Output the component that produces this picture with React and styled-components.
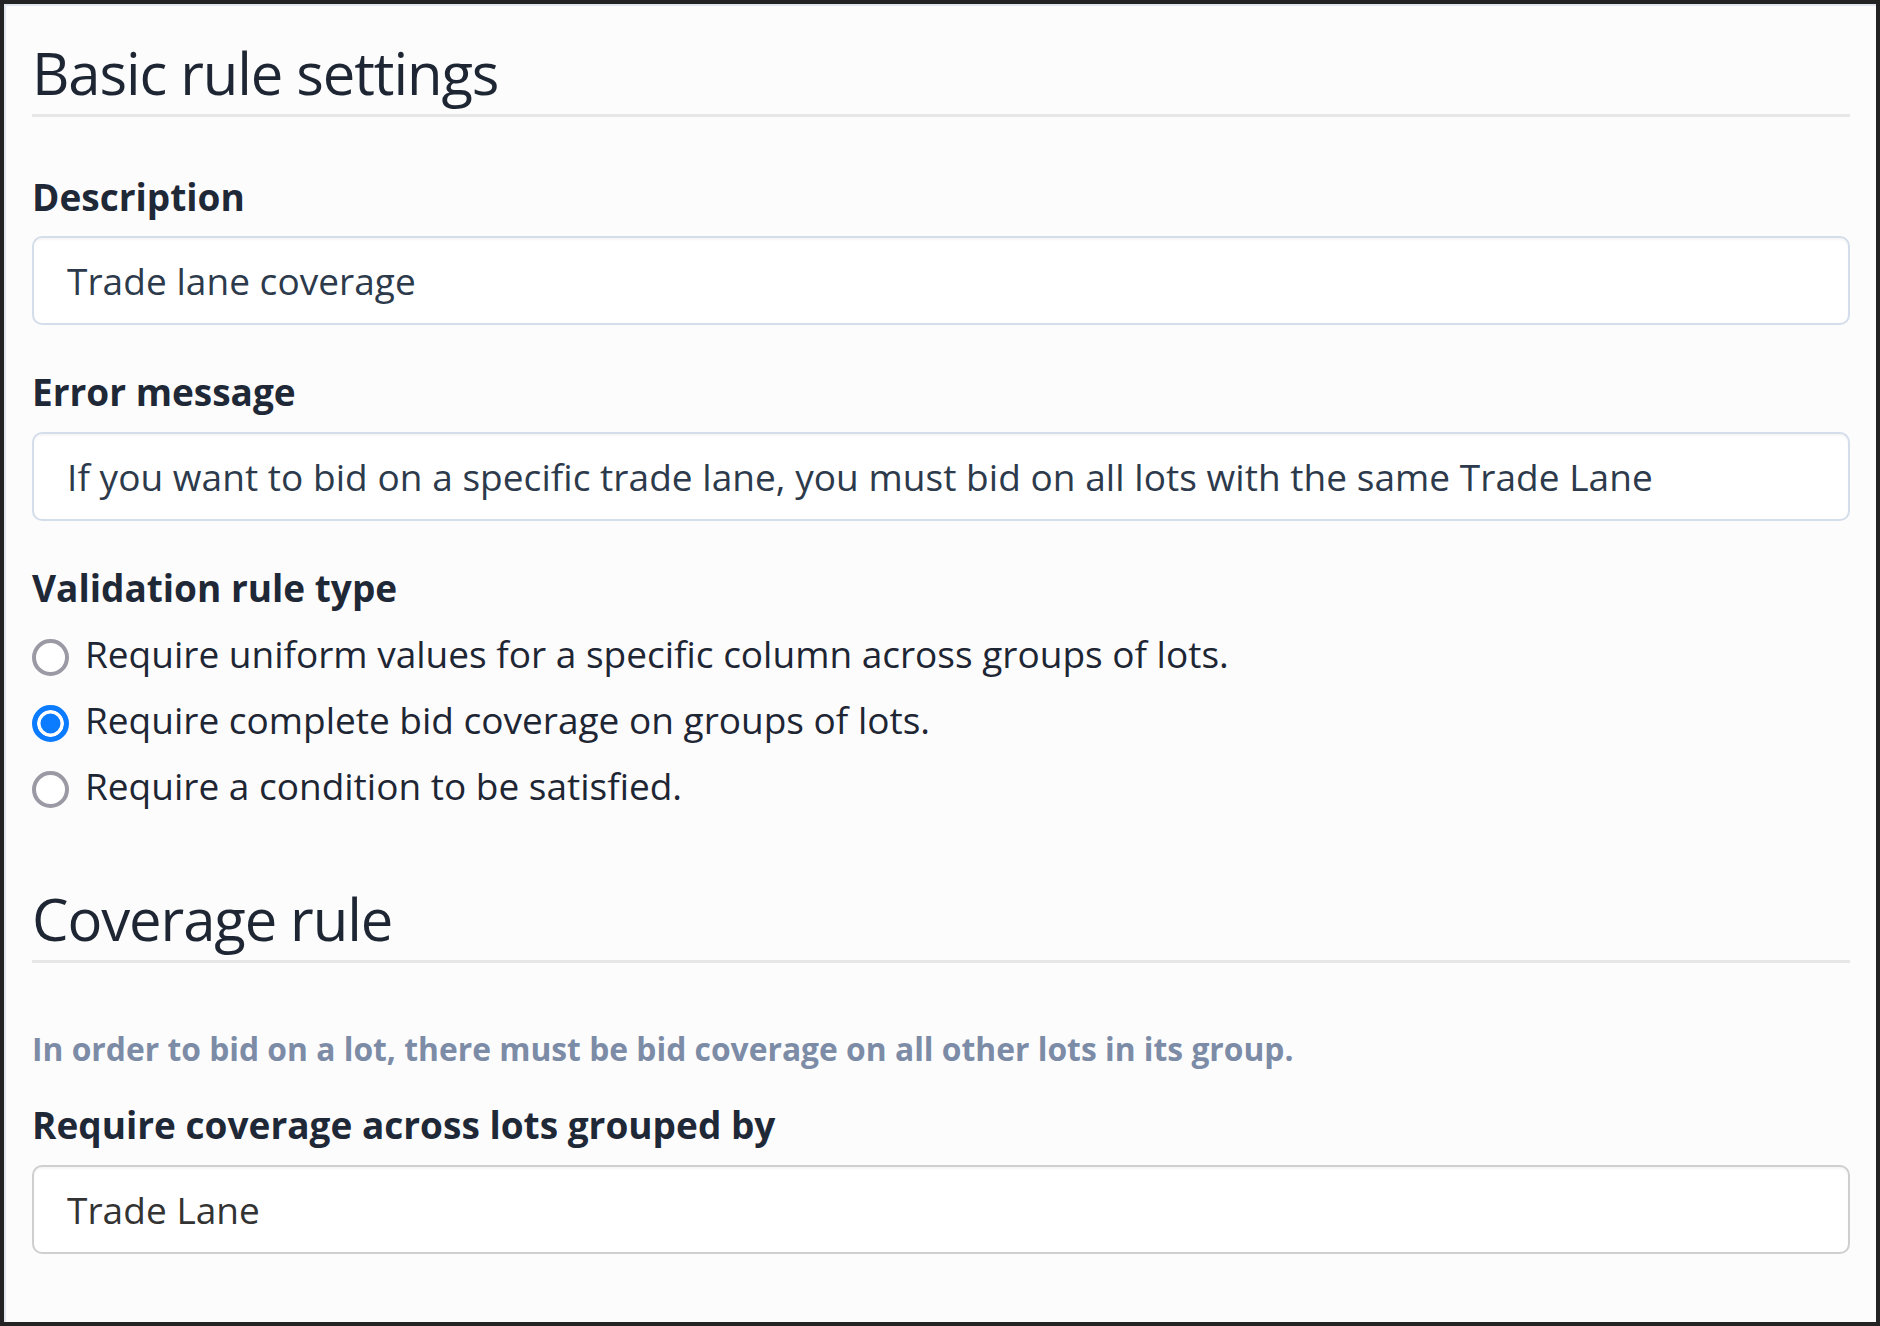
import styled, { createGlobalStyle } from 'styled-components';

const GlobalStyle = createGlobalStyle`
  html, body {
    margin: 0;
    padding: 0;
    background: #fcfcfd;
  }
  * {
    box-sizing: border-box;
  }
`;

const Frame = styled.div`
  width: 1880px;
  height: 1326px;
  border: 4px solid #232323;
  background: #fcfcfd;
`;

const Panel = styled.div`
  height: 100%;
  border-top: 2px solid #e1e6ee;
  border-left: 2px solid #e1e6ee;
  padding: 32px 26px 0 26px;
  font-family: 'Open Sans', 'Noto Sans', sans-serif;
  color: #1f2735;
`;

const SectionTitle = styled.h2`
  margin: 0;
  font-size: 58px;
  font-weight: 400;
  letter-spacing: -1.1px;
  line-height: 1.2;
  color: #1e2633;
  padding-bottom: 6px;
  border-bottom: 3px solid #e7e7e7;
`;

const Field = styled.div`
  margin-top: ${(p) => p.$top}px;
`;

const Label = styled.label`
  display: block;
  font-size: 37px;
  font-weight: 700;
  line-height: 1.4;
  color: #1f2836;
  margin-bottom: 14px;
`;

const TextInput = styled.input`
  display: block;
  width: 100%;
  height: 89px;
  margin: 0;
  padding: 0 32px 0 33px;
  font-family: 'Open Sans', 'Noto Sans', sans-serif;
  font-size: 37px;
  letter-spacing: 0.05px;
  color: ${(p) => (p.$muted ? '#333333' : '#2c3a4b')};
  background: #ffffff;
  border: 2px solid ${(p) => (p.$muted ? '#cfcfcf' : '#d4ddea')};
  border-radius: 10px;
  box-shadow: inset 0 2px 2px rgba(0, 0, 0, 0.04);
  outline: none;
`;

const RadioList = styled.div`
  display: flex;
  flex-direction: column;
  gap: 14px;
  margin-top: 0;
`;

const RadioRow = styled.label`
  display: flex;
  align-items: center;
  gap: 16px;
  font-size: 37px;
  line-height: 1.4;
  color: #1e2634;
`;

const Radio = styled.input`
  appearance: none;
  flex: none;
  width: 37px;
  height: 37px;
  margin: 8px 0 0 0;
  border-radius: 50%;
  border: 4.5px solid #9b99a4;
  background: #ffffff;

  &:checked {
    border: 5px solid #0b7bff;
    background: #0b7bff;
    box-shadow: inset 0 0 0 3.5px #ffffff;
  }
`;

const Hint = styled.p`
  margin: 64px 0 0 0;
  font-size: 31.8px;
  font-weight: 700;
  line-height: 1.4;
  color: #7d8ca6;
`;

const options = [
  'Require uniform values for a specific column across groups of lots.',
  'Require complete bid coverage on groups of lots.',
  'Require a condition to be satisfied.',
];

export default function App() {
  return (
    <>
      <GlobalStyle />
      <Frame>
        <Panel>
          <SectionTitle>Basic rule settings</SectionTitle>

          <Field $top={54}>
            <Label>Description</Label>
            <TextInput readOnly defaultValue="Trade lane coverage" />
          </Field>

          <Field $top={41}>
            <Label>Error message</Label>
            <TextInput
              readOnly
              defaultValue="If you want to bid on a specific trade lane, you must bid on all lots with the same Trade Lane"
            />
          </Field>

          <Field $top={41}>
            <Label>Validation rule type</Label>
            <RadioList>
              {options.map((text, i) => (
                <RadioRow key={text}>
                  <Radio type="radio" name="ruleType" defaultChecked={i === 1} />
                  {text}
                </RadioRow>
              ))}
            </RadioList>
          </Field>

          <Field $top={73}>
            <SectionTitle>Coverage rule</SectionTitle>
          </Field>

          <Hint>
            In order to bid on a lot, there must be bid coverage on all other lots in its group.
          </Hint>

          <Field $top={28}>
            <Label>Require coverage across lots grouped by</Label>
            <TextInput $muted readOnly defaultValue="Trade Lane" />
          </Field>
        </Panel>
      </Frame>
    </>
  );
}
